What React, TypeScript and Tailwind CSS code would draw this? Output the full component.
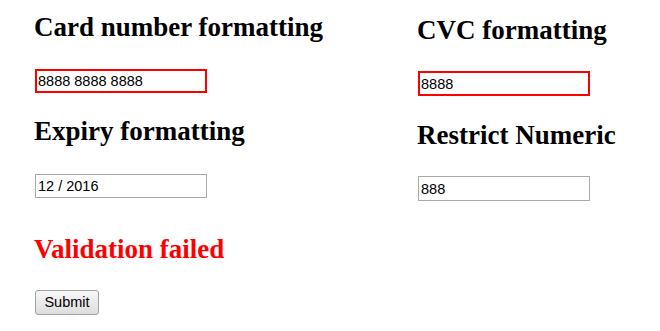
import { useState } from 'react'

const heading = "font-['Liberation_Serif',serif] font-bold text-[27px] leading-[30px]"
const field = "block w-[172px] h-[24px] px-[1px] font-['Liberation_Sans',Arial,sans-serif] text-[14.5px] text-black bg-white outline-none"

export default function App() {
  const [card, setCard] = useState('8888 8888 8888')
  const [expiry, setExpiry] = useState('12 / 2016')
  const [cvc, setCvc] = useState('8888')
  const [num, setNum] = useState('888')

  return (
    <div className="w-[660px] h-[331px] bg-white overflow-hidden flex">
      <div className="w-[417px] shrink-0 pl-[34px] pt-[12px] flex flex-col items-start">
        <h2 className={`${heading} text-black`}>Card number formatting</h2>
        <input
          value={card}
          onChange={e => setCard(e.target.value)}
          className={`${field} ml-[1px] mt-[27px] border-2 border-[#ff0000]`}
        />
        <h2 className={`${heading} text-black mt-[23px]`}>Expiry formatting</h2>
        <input
          value={expiry}
          onChange={e => setExpiry(e.target.value)}
          className={`${field} ml-[1px] mt-[28px] border border-[#a9a9a9] pl-[2px]`}
        />
        <h2 className={`${heading} mt-[36px] text-[#ff0000]`}>Validation failed</h2>
        <button className="ml-[1px] mt-[26px] w-[64px] h-[25px] rounded-[3px] border border-[#a3a3a3] bg-gradient-to-b from-[#f7f7f7] to-[#dddddd] font-['Liberation_Sans',Arial,sans-serif] text-[14.5px] text-black leading-none">
          Submit
        </button>
      </div>
      <div className="pt-[14.5px] flex flex-col items-start">
        <h2 className={`${heading} text-black`}>CVC formatting</h2>
        <input
          value={cvc}
          onChange={e => setCvc(e.target.value)}
          className={`${field} ml-[1px] mt-[26.5px] h-[25px] border-2 border-[#ff0000]`}
        />
        <h2 className={`${heading} text-black mt-[23.5px]`}>Restrict Numeric</h2>
        <input
          value={num}
          onChange={e => setNum(e.target.value.replace(/\D/g, ''))}
          className={`${field} ml-[1px] mt-[26.5px] h-[25px] border border-[#a9a9a9] pl-[2px]`}
        />
      </div>
    </div>
  )
}
